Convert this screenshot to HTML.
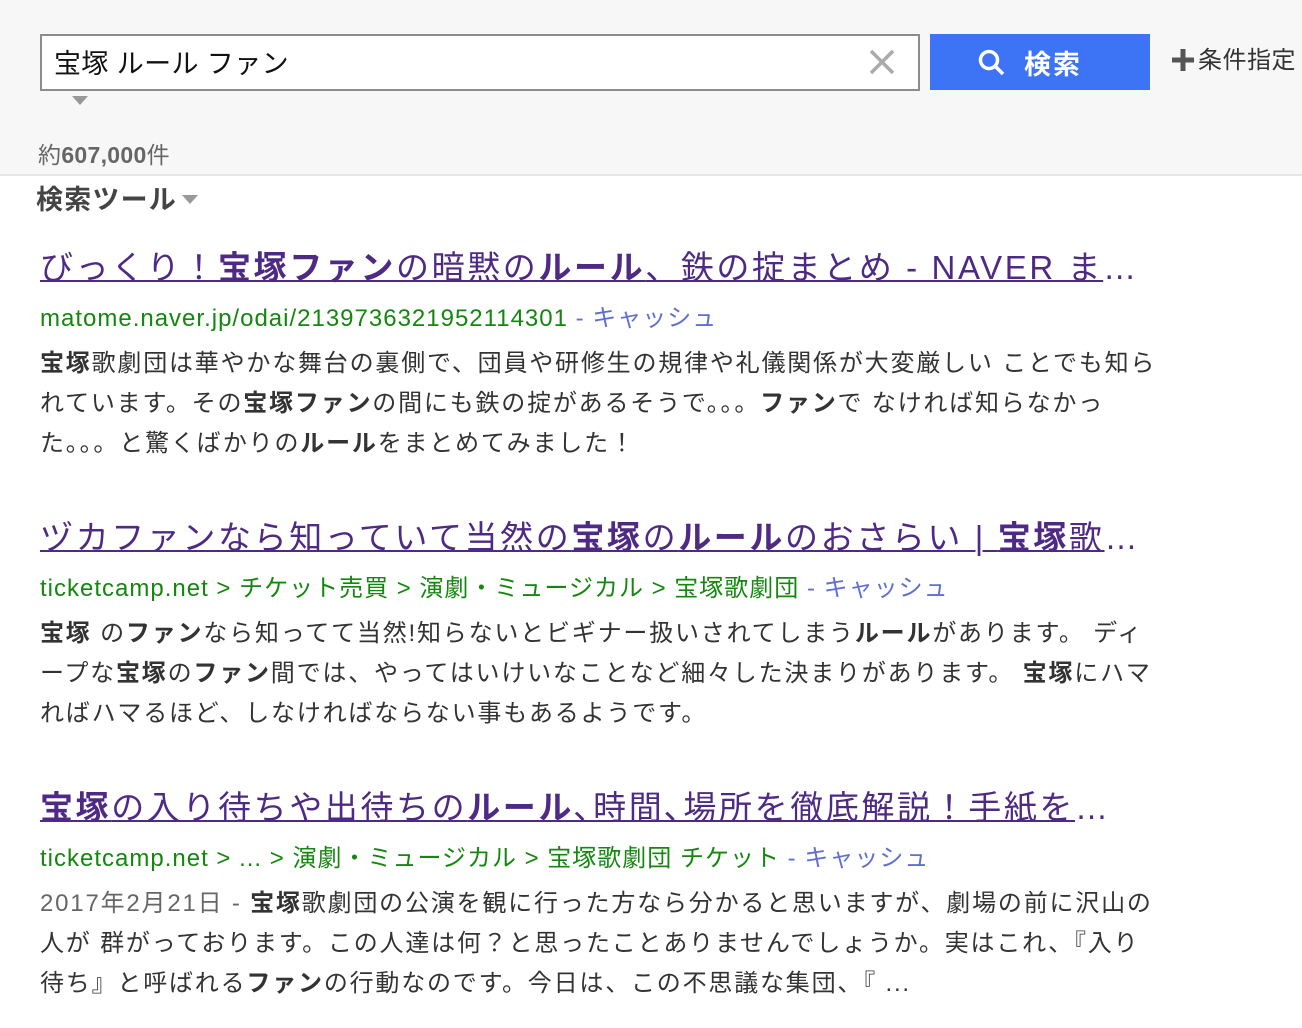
<!DOCTYPE html>
<html><head><meta charset="utf-8">
<style>
body{margin:0;width:1302px;height:1028px;background:#fff;font-family:"Liberation Sans","Noto Sans CJK JP",sans-serif;overflow:hidden;position:relative}
.hdr{position:absolute;left:0;top:0;width:1302px;height:174px;background:#f7f7f7;border-bottom:2px solid #e6e6e6}
.box{position:absolute;left:40px;top:34px;width:876px;height:53px;border:2px solid #8c8c8c;background:#fff}
.q{position:absolute;left:12px;top:6px;font-size:27px;color:#111;letter-spacing:0.4px}
.x{position:absolute;left:826px;top:12px}
.btn{position:absolute;left:930px;top:34px;width:220px;height:56px;background:#3c74f5;color:#fff;font-size:27px;font-weight:bold}
.btn span{position:absolute;left:94px;top:9px;letter-spacing:2px}
.cond{position:absolute;left:1172px;top:40px;font-size:24px;color:#333;letter-spacing:0.5px}
.tri{position:absolute;width:0;height:0;border-left:8px solid transparent;border-right:8px solid transparent;border-top:9px solid #999}
.cnt{position:absolute;left:38px;top:136px;font-size:23px;color:#666;letter-spacing:0.3px}
.tool{position:absolute;left:36px;top:178px;font-size:27px;color:#444;font-weight:bold;letter-spacing:1.2px}
.r{position:absolute;left:40px;width:1130px}
.t{font-size:33px;color:#4e2a84;text-decoration:underline;text-decoration-thickness:2px;white-space:nowrap;overflow:hidden;text-overflow:ellipsis;width:1098px;height:48px;line-height:48px;letter-spacing:2.6px}
.t b{color:#4e2a84}
.u{font-size:24px;color:#14870f;margin-top:12px;line-height:30px;white-space:nowrap;letter-spacing:1px}
.u .c{color:#6070d0}
.s{font-size:24px;color:#333;line-height:40px;margin-top:10px;white-space:nowrap;letter-spacing:1.8px}
.s b{color:#333}
.g{color:#666}
</style></head><body>
<div class="hdr"></div>
<div class="box"><div class="q">宝塚 ルール ファン</div>
<svg class="x" width="28" height="28" viewBox="0 0 28 28"><path d="M3 3L25 25M25 3L3 25" stroke="#aaa" stroke-width="3.5"/></svg></div>
<div class="tri" style="left:72px;top:96px"></div>
<div class="btn"><svg style="position:absolute;left:48px;top:15px" width="28" height="28" viewBox="0 0 28 28"><circle cx="11" cy="11" r="8.5" fill="none" stroke="#fff" stroke-width="3.5"/><path d="M17 17L25 25" stroke="#fff" stroke-width="3.5"/></svg><span>検索</span></div>
<div class="cond"><svg width="22" height="22" viewBox="0 0 22 22" style="vertical-align:-3px;margin-right:4px"><path d="M0 11H22M11 0V22" stroke="#555" stroke-width="5"/></svg>条件指定</div>
<div class="cnt">約<b>607,000</b>件</div>
<div class="tool">検索ツール</div>
<div class="tri" style="left:182px;top:195px;border-top-color:#999"></div>

<div class="r" style="top:244px">
<div class="t">びっくり！<b>宝塚ファン</b>の暗黙の<b>ルール</b>、鉄の掟まとめ - NAVER まとめ</div>
<div class="u">matome.naver.jp/odai/2139736321952114301 <span class="c">- キャッシュ</span></div>
<div class="s"><b>宝塚</b>歌劇団は華やかな舞台の裏側で、団員や研修生の規律や礼儀関係が大変厳しい ことでも知ら<br>れています。その<b>宝塚ファン</b>の間にも鉄の掟があるそうで。。。<b>ファン</b>で なければ知らなかっ<br>た。。。と驚くばかりの<b>ルール</b>をまとめてみました！</div>
</div>

<div class="r" style="top:514px">
<div class="t">ヅカファンなら知っていて当然の<b>宝塚</b>の<b>ルール</b>のおさらい | <b>宝塚</b>歌劇団</div>
<div class="u">ticketcamp.net &gt; チケット売買 &gt; 演劇・ミュージカル &gt; 宝塚歌劇団 <span class="c">- キャッシュ</span></div>
<div class="s"><b>宝塚</b> の<b>ファン</b>なら知ってて当然!知らないとビギナー扱いされてしまう<b>ルール</b>があります。 ディ<br>ープな<b>宝塚</b>の<b>ファン</b>間では、やってはいけいなことなど細々した決まりがあります。 <b>宝塚</b>にハマ<br>ればハマるほど、しなければならない事もあるようです。</div>
</div>

<div class="r" style="top:784px">
<div class="t"><b>宝塚</b>の入り待ちや出待ちの<b>ルール</b>､時間､場所を徹底解説！手紙を渡すには</div>
<div class="u">ticketcamp.net &gt; ... &gt; 演劇・ミュージカル &gt; 宝塚歌劇団 チケット <span class="c">- キャッシュ</span></div>
<div class="s"><span class="g">2017年2月21日 - </span><b>宝塚</b>歌劇団の公演を観に行った方なら分かると思いますが、劇場の前に沢山の<br>人が 群がっております。この人達は何？と思ったことありませんでしょうか。実はこれ、『入り<br>待ち』と呼ばれる<b>ファン</b>の行動なのです。今日は、この不思議な集団、『 ...</div>
</div>
</body></html>
